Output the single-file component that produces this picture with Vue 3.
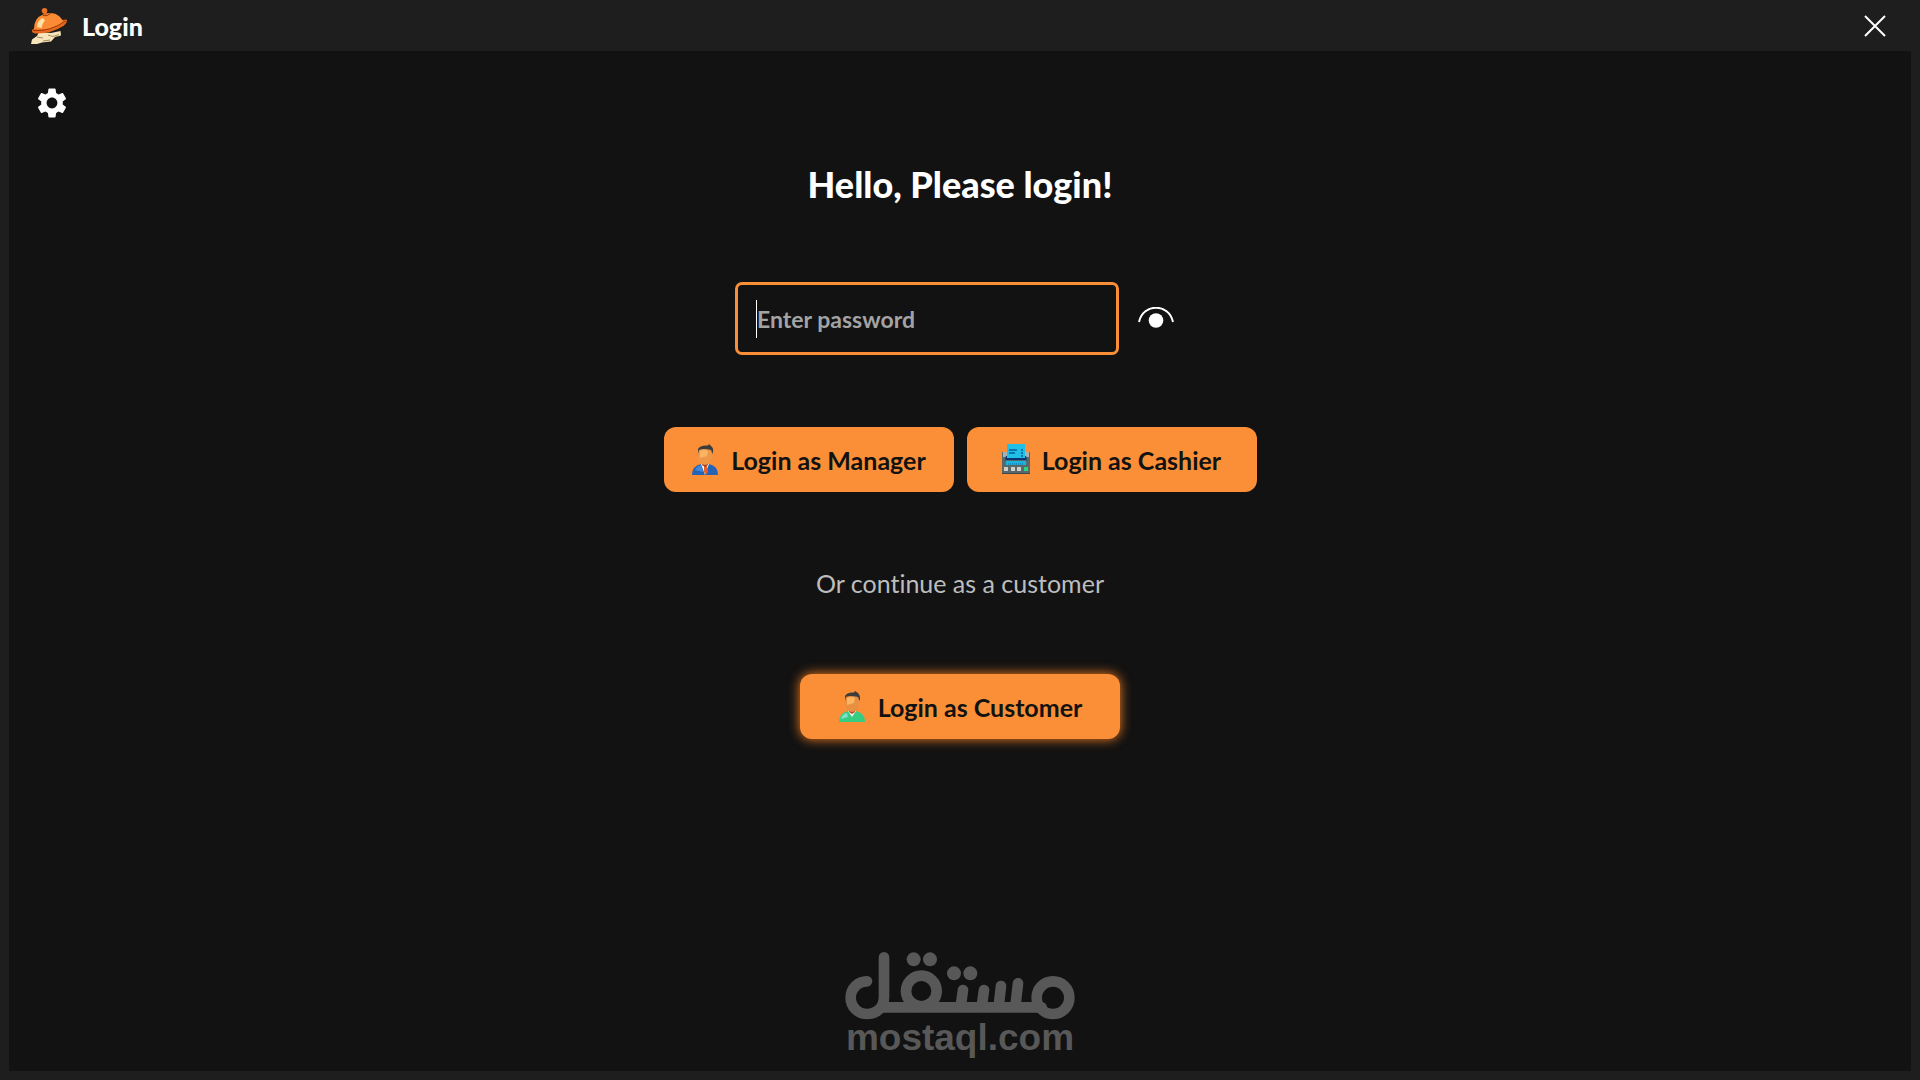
<template>
  <div class="window">
    <header class="title-bar">
      <svg class="app-icon" viewBox="0 0 36 36" aria-hidden="true">
        <path d="M0 36 L1 31.5 L6 28 L8 24 L14 24.5 L20 25 L29.5 23 L30 27.5 L24 29 L20 33.5 L11 34.5 L6 36 Z" fill="#f7e6bd" />
        <path d="M6 29 L12 30 M17 27 L22 28.5 L28 26.5 M12 33 L19 32" stroke="#a98a55" stroke-width="1" fill="none" />
        <path d="M1 22 Q0 24.500 4 25.500 Q20 26 33 17.500 Q37 14 35.500 11.500 L31 12 L4 20 Z" fill="#e8671a" />
        <path d="M3 21 Q3 10 12 6.500 Q22 3 28 8 Q31.500 11 32 14 Q20 23 3 21 Z" fill="#fb8c35" />
        <path d="M2 22.500 Q19 24 34.500 13" stroke="#9a3d0c" stroke-width="1" fill="none" />
        <path d="M6 19 Q6.500 13 11 10 L14 12 Q11 16 10.500 20 Z" fill="#fde0a5" />
        <path d="M12 7.500 Q16 9 20 5" stroke="#9a3d0c" stroke-width="1" fill="none" />
        <path d="M13.500 3 L14.500 7" stroke="#e8671a" stroke-width="3" />
        <circle cx="13.500" cy="2.800" r="2.800" fill="#e97424" />
      </svg>
      <h1>Login</h1>
      <button class="icon-button close" type="button" aria-label="Close">
        <svg width="22" height="22" viewBox="0 0 22 22">
          <path d="M1 1 L21 21 M21 1 L1 21" stroke="#fff" stroke-width="2" />
        </svg>
      </button>
    </header>

    <main class="content">
      <button class="icon-button settings" type="button" aria-label="Settings">
        <svg width="36" height="36" viewBox="0 0 24 24" fill="#fff">
          <path d="M19.140 12.940c.04-.3.06-.61.06-.94 0-.32-.02-.64-.07-.94l2.030-1.580c.18-.14.23-.41.12-.61l-1.920-3.320c-.12-.22-.37-.29-.59-.22l-2.390.96c-.5-.38-1.030-.7-1.620-.94l-.36-2.540c-.04-.24-.24-.41-.48-.41h-3.840c-.24 0-.43.17-.47.41l-.36 2.540c-.59.24-1.130.57-1.620.94l-2.390-.96c-.22-.08-.47 0-.59.22L2.740 8.870c-.12.21-.08.47.12.61l2.030 1.580c-.05.3-.09.63-.09.94s.02.64.07.94l-2.030 1.580c-.18.14-.23.41-.12.61l1.920 3.320c.12.22.37.29.59.22l2.390-.96c.5.38 1.030.7 1.620.94l.36 2.540c.05.24.24.41.48.41h3.840c.24 0 .44-.17.47-.41l.36-2.540c.59-.24 1.130-.56 1.620-.94l2.390.96c.22.08.47 0 .59-.22l1.920-3.320c.12-.22.07-.47-.12-.61l-2.010-1.580zM12 15.600c-1.980 0-3.600-1.620-3.600-3.600s1.620-3.600 3.600-3.600 3.600 1.620 3.600 3.600-1.620 3.600-3.600 3.600z" />
        </svg>
      </button>

      <form class="login" @submit.prevent>
        <h2>Hello, Please login!</h2>

        <div class="password-row">
          <div class="field" :class="{ empty: !password }">
            <input
              v-model="password"
              :type="visible ? 'text' : 'password'"
              placeholder="Enter password"
              aria-label="Enter password"
            />
          </div>
          <button class="icon-button reveal" type="button" aria-label="Show password" @click="visible = !visible">
            <svg width="38" height="24" viewBox="0 0 38 24">
              <path d="M2 15 C6 -4 32 -4 36 15" fill="none" stroke="#fff" stroke-width="2" />
              <circle cx="19" cy="13.500" r="7.300" fill="#fff" />
            </svg>
          </button>
        </div>

        <div class="staff-row">
          <button class="login-button" type="submit">
            <svg class="role-icon" viewBox="0 0 28 32" aria-hidden="true">
              <path d="M1 31 Q1 22 10 20 H18 Q27 22 27 31 Z" fill="#2463b5" />
              <path d="M4 26 Q6 22 10 21 L12 28 Z" fill="#4388d6" />
              <path d="M10 20 L14 31 L18 20 Z" fill="#f5f5f5" />
              <path d="M13 22 H16 L17 28 L15 31 L13 28 Z" fill="#e5622a" />
              <path d="M11 17 H17 V21 L14 23 L11 21 Z" fill="#a83b1b" />
              <ellipse cx="14" cy="12" rx="7.500" ry="9" fill="#ef9748" />
              <path d="M9 7 Q13 5 17 7 L16 12 L9 14 Z" fill="#fbb461" />
              <path d="M7 10 L7 5 Q9 1 17 1.500 L18 0 L21 3 Q23 5 21.500 10 L20 6 Q12 4 8 6 Z" fill="#3c3c3c" />
            </svg>
            Login as Manager
          </button>
          <button class="login-button" type="submit">
            <svg class="role-icon" viewBox="0 0 28 32" aria-hidden="true">
              <path d="M0 8 H28 V30 H0 Z" fill="#59686b" />
              <path d="M1 8 H5 V13 H1 Z M23 8 H27 V13 H23 Z" fill="#a4b0b1" />
              <path d="M4 12 H24 L25 16 H3 Z" fill="#0b3470" />
              <path d="M5 0 H23 V14 H5 Z" fill="#20bfe6" />
              <path d="M7 6 H15 M7 9 H13 M19 6 H21 M19 9 H21 M19 12 H21" stroke="#095f9d" stroke-width="1.500" />
              <path d="M4 17 H24 V21 H4 Z" fill="#18b5e0" />
              <path d="M6 20 H22" stroke="#086da5" stroke-width="1" stroke-dasharray="1 1" />
              <path d="M2 23 H6 V27 H2 Z M9 23 H13 V27 H9 Z M15 23 H19 V27 H15 Z" fill="#d1cec8" />
              <path d="M22 23 H26 V27 H22 Z" fill="#28d580" />
              <path d="M0 29 H28 V30 H0 Z" fill="#39494c" />
            </svg>
            Login as Cashier
          </button>
        </div>

        <p>Or continue as a customer</p>

        <button class="login-button customer" type="submit">
          <svg class="role-icon" viewBox="0 0 28 32" aria-hidden="true">
            <path d="M1 31 Q1 22 10 20 H18 Q27 22 27 31 Z" fill="#36cd83" />
            <path d="M3 28 Q4 23 9 22 L10 26 Z" fill="#80dfcb" />
            <path d="M10 20 L14 26 L18 20 Z" fill="#f5f5f5" />
            <path d="M11 17 H17 V21 L14 23 L11 21 Z" fill="#b84921" />
            <ellipse cx="14" cy="12" rx="7.500" ry="9" fill="#e88f42" />
            <path d="M9 7 Q13 5 17 7 L16 12 L9 14 Z" fill="#fbb461" />
            <path d="M7 10 L7 5 Q9 1 16 1.500 L17 0 L20 2 Q23 5 21.500 10 L20 6 Q12 4 8 6 Z" fill="#3c3c3c" />
          </svg>
          Login as Customer
        </button>
      </form>

      <footer class="brand">
        <svg width="230" height="68" viewBox="75 66 690 204" role="img" aria-label="مستقل">
          <g fill="none" stroke="#585858" stroke-width="32" stroke-linecap="round">
            <path d="M141 154 A49 49 0 0 0 141 252 C170 252 192 232 192 200 V82" />
            <path d="M185 232 H665" />
            <circle cx="304" cy="183" r="46" />
            <circle cx="699" cy="203" r="49" />
            <path d="M429 180 L422 230 M492 180 L485 230 M543 168 L536 230 M594 160 L586 230" />
          </g>
          <g fill="#585858">
            <circle cx="281" cy="88" r="21" />
            <circle cx="330" cy="88" r="21" />
            <circle cx="402" cy="130" r="21" />
            <circle cx="451" cy="130" r="21" />
          </g>
        </svg>
        <span>mostaql.com</span>
      </footer>
    </main>
  </div>
</template>

<script setup>
import { ref } from 'vue'

const password = ref('')
const visible = ref(false)
</script>

<style>
body {
  margin: 0;
  background: #1e1e1e;
}
</style>

<style scoped>
.window {
  display: flex;
  flex-direction: column;
  box-sizing: border-box;
  min-height: 100vh;
  padding: 0 9px 9px;
  background: #1e1e1e;
  color: #fff;
  font-family: Lato, "Open Sans", sans-serif;
  font-variant-ligatures: none;
}

.title-bar {
  display: flex;
  align-items: center;
  gap: 15px;
  height: 51px;
  padding: 0 25px 0 22px;
}

.app-icon {
  width: 36px;
  height: 36px;
}

.title-bar h1 {
  margin: 0;
  font-size: 25px;
  line-height: 32px;
  font-weight: 900;
}

.icon-button {
  display: flex;
  align-items: center;
  justify-content: center;
  padding: 0;
  border: none;
  background: transparent;
  cursor: pointer;
}

.close {
  margin-left: auto;
}

.content {
  display: flex;
  flex: 1;
  flex-direction: column;
  background: #121212;
}

.settings {
  align-self: flex-start;
  margin: 34px 0 0 25px;
}

.login {
  display: flex;
  flex-direction: column;
  align-items: center;
}

.login h2 {
  margin: 43px 0 78px;
  font-size: 36px;
  line-height: 40px;
  font-weight: 900;
}

.password-row {
  display: flex;
  gap: 8px;
}

.field {
  position: relative;
}

.field.empty::after {
  content: '';
  position: absolute;
  top: 18px;
  left: 21px;
  width: 1px;
  height: 38px;
  background: #fff;
}

.field input {
  box-sizing: border-box;
  width: 384px;
  height: 73px;
  padding: 0 19px;
  border: 3px solid #fa8f37;
  border-radius: 7px;
  outline: none;
  background: transparent;
  color: #fff;
  font-family: inherit;
  font-size: 23px;
  font-weight: 700;
}

.field input::placeholder {
  color: #a3a3a3;
  opacity: 1;
}

.reveal {
  width: 58px;
}

.staff-row {
  display: flex;
  gap: 13px;
  margin-top: 72px;
}

.login-button {
  display: flex;
  align-items: center;
  justify-content: center;
  gap: 12px;
  width: 290px;
  height: 65px;
  padding: 0;
  border: none;
  border-radius: 12px;
  background: #fa8f37;
  color: #121212;
  font-family: inherit;
  font-size: 25px;
  font-weight: 700;
  cursor: pointer;
}

.role-icon {
  width: 28px;
  height: 32px;
}

.login p {
  margin: 75px 0;
  color: #bdbdbd;
  font-size: 25px;
  line-height: 32px;
}

.customer {
  width: 320px;
  box-shadow: 0 0 12px #fa7f20;
}

.brand {
  display: flex;
  flex-direction: column;
  align-items: center;
  margin-top: auto;
  padding-bottom: 15px;
  color: #585858;
  font-family: "Liberation Sans", Arial, sans-serif;
  font-size: 37px;
  line-height: 36px;
  font-weight: 700;
}
</style>
